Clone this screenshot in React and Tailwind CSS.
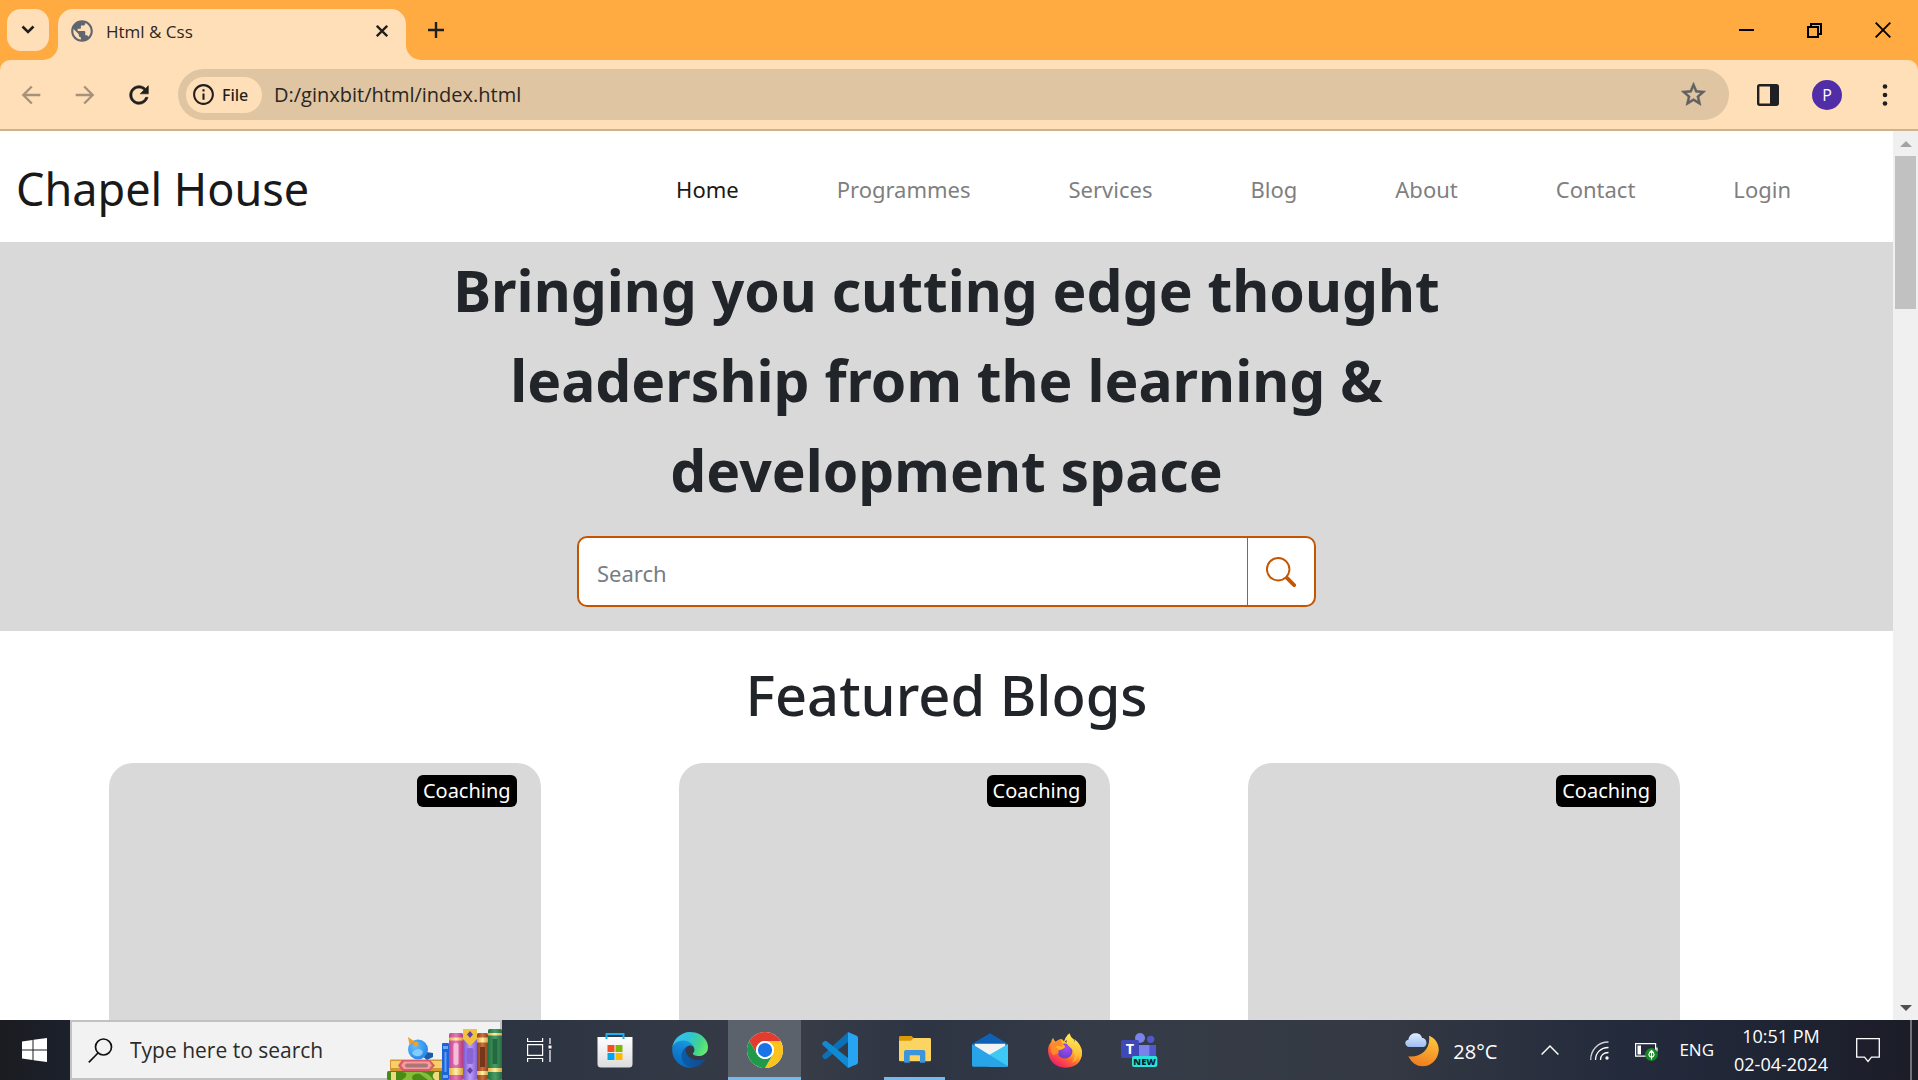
import React from "react";
import { MdArrowBack, MdArrowForward, MdInfoOutline, MdPublic } from "react-icons/md";
import { BsSearch } from "react-icons/bs";

const navLinks = ["Home", "Programmes", "Services", "Blog", "About", "Contact", "Login"];
const blogs = [1, 2, 3];

/* ---------- Browser chrome ---------- */

function TabStrip() {
  return (
    <div className="flex h-[60px] shrink-0 items-end bg-[#ffab41] pl-[7px]">
      <button aria-label="Search tabs" className="relative z-10 mb-[9px] flex h-[42px] w-[42px] items-center justify-center rounded-[14px] bg-[#ffdfb7]">
        <svg width="14" height="10" viewBox="0 0 14 10" fill="none" stroke="#1f1f1f" strokeWidth="2.6">
          <path d="M1.5 1.5 7 7l5.5-5.5" />
        </svg>
      </button>
      <span className="-ml-[6px] h-[15px] w-[15px] bg-[#ffdfb7]">
        <span className="block h-full rounded-br-[15px] bg-[#ffab41]" />
      </span>
      <div className="flex h-[51px] w-[348px] items-center rounded-t-[15px] bg-[#ffdfb7] pb-[8px] pl-[11px] pr-[14px]">
        <MdPublic size={26} color="#5f6670" />
        <span className="ml-[11px] flex-1 pt-[2px] text-[17px] text-[#2b2723]">Html &amp; Css</span>
        <button aria-label="Close tab" className="flex h-5 w-5 items-center justify-center">
          <svg width="12" height="12" viewBox="0 0 12 12" stroke="#1f1f1f" strokeWidth="2.3">
            <path d="M.8.8l10.4 10.4M11.2.8.8 11.2" />
          </svg>
        </button>
      </div>
      <span className="h-[15px] w-[15px] bg-[#ffdfb7]">
        <span className="block h-full rounded-bl-[15px] bg-[#ffab41]" />
      </span>
      <button aria-label="New tab" className="mb-[21px] flex h-[18px] w-[30px] items-center justify-center">
        <svg width="16" height="16" viewBox="0 0 16 16" stroke="#1f1f1f" strokeWidth="2.4">
          <path d="M8 0v16M0 8h16" />
        </svg>
      </button>
      <div className="ml-auto flex h-full pr-px">
        <button aria-label="Minimize" className="flex w-[68px] items-center justify-center">
          <svg width="15" height="15" viewBox="0 0 15 15" stroke="#000" strokeWidth="2">
            <path d="M0 7h15" />
          </svg>
        </button>
        <button aria-label="Restore" className="flex w-[68px] items-center justify-center">
          <svg width="15" height="15" viewBox="0 0 15 15" fill="none" stroke="#000" strokeWidth="2">
            <path d="M1 4h10v10H1zM4 4V1h10v10h-3" />
          </svg>
        </button>
        <button aria-label="Close" className="flex w-[69px] items-center justify-center">
          <svg width="16" height="16" viewBox="0 0 16 16" stroke="#000" strokeWidth="1.9">
            <path d="M.7.7l14.6 14.6M15.3.7.7 15.3" />
          </svg>
        </button>
      </div>
    </div>
  );
}

function Toolbar() {
  return (
    <div className="shrink-0 bg-[#ffab41]">
      <div className="flex h-[71px] items-center rounded-t-[10px] border-b-2 border-[#cfb28f] bg-[#ffdfb7] pl-[17px] pr-[20px]">
        <button aria-label="Back"><MdArrowBack size={28} color="#a6917b" /></button>
        <button aria-label="Forward" className="ml-[26px]"><MdArrowForward size={28} color="#a6917b" /></button>
        <button aria-label="Reload" className="ml-[26px]">
          <svg width="28" height="28" viewBox="0 0 24 24" fill="#1f1f1f" stroke="#1f1f1f" strokeWidth="0.5">
            <path d="M17.650 6.350C16.200 4.900 14.210 4 12 4c-4.420 0-7.990 3.580-7.990 8s3.570 8 7.990 8c3.730 0 6.840-2.550 7.730-6h-2.080c-.82 2.330-3.040 4-5.650 4-3.310 0-6-2.690-6-6s2.690-6 6-6c1.660 0 3.140.69 4.220 1.780L13 11h7V4l-2.350 2.350z" />
          </svg>
        </button>
        <div className="ml-[25px] flex h-[51px] flex-1 items-center rounded-full bg-[#dfc5a2] pl-2 pr-[21px]">
          <button className="flex h-9 w-[76px] items-center rounded-full bg-[#ffdfb7] pl-[5px] text-[16px] text-[#1f1f1f]">
            <MdInfoOutline size={25} />
            <span className="ml-[6px] font-['Noto_Sans'] font-medium">File</span>
          </button>
          <input
            aria-label="Address"
            defaultValue="D:/ginxbit/html/index.html"
            className="ml-3 min-w-0 flex-1 bg-transparent text-[20px] leading-7 text-[#2a2622] outline-none"
          />
          <button aria-label="Bookmark">
            <svg width="29" height="29" viewBox="0 0 24 24" fill="#606062" stroke="#606062" strokeWidth="0.500">
              <path d="M22 9.240l-7.190-.62L12 2 9.190 8.630 2 9.240l5.460 4.730L5.820 21 12 17.270 18.180 21l-1.630-7.030L22 9.240zM12 15.400l-3.760 2.270 1-4.280-3.320-2.880 4.380-.38L12 6.100l1.710 4.040 4.380.38-3.320 2.880 1 4.280L12 15.400z" />
            </svg>
          </button>
        </div>
        <button aria-label="Side panel" className="ml-[28px]">
          <svg width="22" height="22" viewBox="0 0 22 22">
            <rect x="1.2" y="1.2" width="19.6" height="19.6" rx="1.5" fill="none" stroke="#1f2023" strokeWidth="2.4" />
            <path d="M13 1h8v20h-8z" fill="#1f2023" />
          </svg>
        </button>
        <button aria-label="Profile" className="ml-[33px] flex h-[30px] w-[30px] items-center justify-center rounded-full bg-[#512da8] text-[16px] text-white">
          P
        </button>
        <button aria-label="Menu" className="ml-[30px] flex w-[26px] justify-center">
          <svg width="6" height="22" viewBox="0 0 6 22" fill="#1f1f1f">
            <circle cx="3" cy="2.5" r="2.3" />
            <circle cx="3" cy="11" r="2.3" />
            <circle cx="3" cy="19.5" r="2.3" />
          </svg>
        </button>
      </div>
    </div>
  );
}

/* ---------- Web page ---------- */

function Page() {
  return (
    <main className="min-w-0 flex-1 overflow-hidden bg-white font-['Noto_Sans','Open_Sans',sans-serif] text-[#212529]">
      <header className="flex h-[111px] items-center pl-4 pr-[102px] pt-[5px]">
        <a href="#" className="whitespace-nowrap text-[45px] leading-[68px] text-[#191919]">Chapel House</a>
        <nav className="ml-auto flex gap-[98px] text-[22px]">
          {navLinks.map((label, i) => (
            <a key={label} href="#" className={i === 0 ? "text-[#191919]" : "text-[#7f7f7f]"}>{label}</a>
          ))}
        </nav>
      </header>

      <section className="flex flex-col items-center bg-[#d9d9d9] pb-6 pt-[3px]">
        <h1 className="max-w-[1040px] text-center text-[57px] font-bold leading-[90px]">
          Bringing you cutting edge thought leadership from the learning &amp; development space
        </h1>
        <form className="mt-[21px] flex h-[71px] w-full max-w-[739px] overflow-hidden rounded-[10px] border-2 border-[#c65500] bg-white" onSubmit={(e) => e.preventDefault()}>
          <input aria-label="Search" placeholder="Search" className="min-w-0 flex-1 px-[18px] pt-1 text-[22px] outline-none placeholder:text-[#777d84]" />
          <button aria-label="Submit search" className="flex w-[67px] items-center justify-center border-l border-[#c65500]">
            <BsSearch size={30} color="#c65500" />
          </button>
        </form>
      </section>

      <section className="pt-[27px]">
        <h2 className="text-center text-[56px] font-medium leading-[72px]">Featured Blogs</h2>
        <div className="mt-[33px] grid grid-cols-3 gap-x-[138px] pl-[109px] pr-[213px]">
          {blogs.map((id) => (
            <article key={id} className="flex h-[400px] items-start justify-end rounded-[24px] bg-[#d9d9d9] pr-6 pt-3">
              <span className="flex h-8 items-center rounded-md bg-black px-[6px] text-[20px] text-white">Coaching</span>
            </article>
          ))}
        </div>
      </section>
    </main>
  );
}

function Scrollbar() {
  return (
    <div className="flex w-[25px] flex-col items-center bg-[#f0f0f0]">
      <button aria-label="Scroll up" className="flex h-[25px] items-center justify-center">
        <svg width="12" height="6" viewBox="0 0 12 6" fill="#a3a3a3"><path d="M6 0l6 6H0z" /></svg>
      </button>
      <span className="h-[153px] w-[21px] bg-[#c1c1c1]" />
      <button aria-label="Scroll down" className="mt-auto flex h-[25px] items-center justify-center">
        <svg width="12" height="6" viewBox="0 0 12 6" fill="#505050"><path d="M0 0h12L6 6z" /></svg>
      </button>
    </div>
  );
}

/* ---------- Taskbar icons ---------- */

function Books() {
  return (
    <svg width="115" height="52" viewBox="0 0 115 52" className="shrink-0">
      <defs>
        <linearGradient id="bkPink"><stop offset="0" stopColor="#c4458f" /><stop offset=".5" stopColor="#e579b5" /><stop offset="1" stopColor="#b43c82" /></linearGradient>
        <linearGradient id="bkPurple"><stop offset="0" stopColor="#7a55cf" /><stop offset=".5" stopColor="#bd9ff5" /><stop offset="1" stopColor="#8360d3" /></linearGradient>
        <linearGradient id="bkBrown"><stop offset="0" stopColor="#8f4520" /><stop offset=".5" stopColor="#c9703d" /><stop offset="1" stopColor="#8a4323" /></linearGradient>
        <linearGradient id="bkGreen"><stop offset="0" stopColor="#237443" /><stop offset=".5" stopColor="#4b9b66" /><stop offset="1" stopColor="#256c41" /></linearGradient>
        <linearGradient id="bkGold"><stop offset="0" stopColor="#e2a93e" /><stop offset=".5" stopColor="#fff0a5" /><stop offset="1" stopColor="#d9a035" /></linearGradient>
        <radialGradient id="bird" cx=".35" cy=".35" r=".75"><stop offset="0" stopColor="#62bbff" /><stop offset="1" stopColor="#2382e4" /></radialGradient>
      </defs>
      <rect x="0" y="43" width="56" height="9" rx="1.5" fill="#4a8b17" />
      <path d="M4 44h5v8H4zM48 52c-3-3-3-5 0-8h4v8z" fill="#f1d980" />
      <path d="M14 44c8 0 6 5 1 8h11c-3-4 2-7 7-6l8 6h5c-3-6-8-8-14-8z" fill="#86bd38" />
      <rect x="3" y="31.500" width="53" height="11.500" rx="1" fill="#d59632" />
      <rect x="4" y="33" width="52" height="7" fill="#f5cf69" />
      <path d="M15 32h28l5 5.500-5 5.500H15l-4-5.500z" fill="#d75b68" />
      <path d="M17 33.500h25l3 4-3 3.500H17l-3-3.500z" fill="#f79b9c" />
      <rect x="18" y="35.500" width="23" height="4" rx="2" fill="#a97775" />
      <path d="M35 28l4-4 7 1v4l-6 3z" fill="#195ca8" />
      <circle cx="31" cy="21.500" r="10" fill="url(#bird)" />
      <path d="M21 9l6.500 4.500L22.500 17z" fill="#f59a24" />
      <circle cx="29" cy="16" r="2.500" fill="#f2a326" />
      <path d="M25 25c3-5 9-5 11-1-1 5-8 6-11 1z" fill="#82ccff" />
      <rect x="55" y="15" width="7" height="37" rx="1" fill="#1d64d8" />
      <path d="M56 18h5v3h-5zM56 47h5v3h-5z" fill="#6fa9fb" />
      <rect x="57.500" y="24" width="2" height="20" fill="#5f9df8" />
      <rect x="62" y="5" width="14" height="47" rx="1.500" fill="url(#bkPink)" />
      <path d="M62 9.500h14v3H62zM62 40h14v7H62z" fill="url(#bkGold)" />
      <rect x="66.500" y="15" width="5" height="22" rx="2" fill="#f5bdda" />
      <rect x="76" y="1" width="14" height="51" rx="1.500" fill="url(#bkPurple)" />
      <path d="M76 1h14v10l-7 7-7-7z" fill="#f2c13f" />
      <path d="M83 3l3 3.500-3 3.500-3-3.500zM83 39l3 3.500-3 3.500-3-3.500z" fill="#6442ad" />
      <rect x="79.500" y="20" width="7" height="16" rx="2" fill="#8864d6" />
      <rect x="90" y="5" width="11" height="47" rx="1.500" fill="url(#bkBrown)" />
      <path d="M90 9.500h11v5H90zM90 43h11v4H90z" fill="url(#bkGold)" />
      <rect x="93" y="19" width="5" height="20" fill="#743718" />
      <rect x="101" y="1" width="14" height="51" rx="1.500" fill="url(#bkGreen)" />
      <path d="M101 5h14v2.500h-14zM101 40h14v4h-14z" fill="url(#bkGold)" />
      <rect x="105.500" y="11" width="5" height="25" fill="#236a3f" />
    </svg>
  );
}

function TaskView() {
  return (
    <svg width="25" height="24" viewBox="0 0 25 24" fill="none" stroke="#fff" strokeWidth="1.200">
      <path d="M.6 0v3.500h15V0M.6 6.600h15v10.800H.6zM.6 24v-3.500h15V24M23 0v6M23 12v12" />
      <path d="M21.500 7.500h3v3h-3z" fill="#fff" stroke="none" />
    </svg>
  );
}

function Store() {
  return (
    <svg width="36" height="36" viewBox="0 0 36 36">
      <defs><linearGradient id="bag" x2="0" y2="1"><stop offset="0" stopColor="#fff" /><stop offset="1" stopColor="#dcdcdc" /></linearGradient></defs>
      <path d="M.5 5h35v27a3.500 3.500 0 0 1-3.500 3.500H4A3.500 3.500 0 0 1 .5 32z" fill="url(#bag)" />
      <path d="M9.500 7V2h17v5" fill="none" stroke="#1cb0ee" strokeWidth="2" />
      <path d="M10.500 13h7v7h-7z" fill="#f25022" />
      <path d="M18.500 13h7v7h-7z" fill="#7fba00" />
      <path d="M10.500 21h7v7h-7z" fill="#00a4ef" />
      <path d="M18.500 21h7v7h-7z" fill="#ffb900" />
    </svg>
  );
}

function Edge() {
  return (
    <svg width="36" height="36" viewBox="0 0 257 257">
      <defs>
        <linearGradient id="edDark" x1=".25" y1=".7" x2="1" y2=".7"><stop offset="0" stopColor="#0c59a4" /><stop offset="1" stopColor="#114a8b" /></linearGradient>
        <linearGradient id="edMid" x1=".6" y1="0" x2=".3" y2="1"><stop offset="0" stopColor="#1b9de2" /><stop offset=".4" stopColor="#1480d4" /><stop offset="1" stopColor="#0668ba" /></linearGradient>
        <linearGradient id="edTop" x1="0" y1=".3" x2="1" y2=".6"><stop offset="0" stopColor="#35c1f1" /><stop offset=".4" stopColor="#2fc3d8" /><stop offset=".75" stopColor="#42d48c" /><stop offset="1" stopColor="#66eb6e" /></linearGradient>
      </defs>
      <path fill="url(#edDark)" d="M231 190.500c-3.400 1.800-6.900 3.400-10.500 4.700a101.300 101.300 0 0 1-35.600 6.400c-46.900 0-87.700-32.200-87.700-73.600a31.400 31.400 0 0 1 16.400-27.400c-42.400 1.800-53.300 46-53.300 71.900 0 73.300 67.500 80.700 82.100 80.700 7.800 0 19.700-2.300 26.800-4.500l1.300-.4a128.300 128.300 0 0 0 66.600-52.800 4 4 0 0 0-6.100-5z" />
      <path fill="url(#edMid)" d="M105.700 241.400A79.200 79.200 0 0 1 83 220.200a80.700 80.700 0 0 1 30.500-119.600c3.200-1.500 8.500-4.100 15.600-4a32.400 32.400 0 0 1 25.700 13 31.900 31.900 0 0 1 6.300 18.700c0-.2 24.500-79.600-80-79.600C37.200 48.700 1.200 90.300 1.200 126.800a130 130 0 0 0 12.100 56 128 128 0 0 0 156.200 65.800 75.500 75.500 0 0 1-63.800-7.200z" />
      <path fill="url(#edTop)" d="M152.300 148.900c-.8 1-3.300 2.500-3.300 5.700 0 2.600 1.700 5.200 4.800 7.300 14.500 10.100 41.900 8.800 42 8.800a60.100 60.100 0 0 0 30.500-8.400 61.900 61.900 0 0 0 30.500-53.400c.3-22.400-8-37.300-11.300-43.900C224.400 23.700 178.300.8 128.200.8A128 128 0 0 0 .2 127c.5-36.500 36.700-66 80-66 3.500 0 23.500.3 42 10.100a72.600 72.600 0 0 1 30.900 29.300c6.100 10.600 7.200 24.100 7.200 29.500s-2.700 13.300-8 19z" />
    </svg>
  );
}

function Chrome() {
  return (
    <svg width="36" height="36" viewBox="0 0 48 48">
      <circle cx="24" cy="24" r="24" fill="#fff" />
      <path d="M3.220 12A24 24 0 0 1 44.780 12H24a12 12 0 0 0-10.390 18z" fill="#e33b2e" />
      <path d="M44.780 12A24 24 0 0 1 24 48l10.390-18A12 12 0 0 0 24 12z" fill="#fcc31e" />
      <path d="M24 48A24 24 0 0 1 3.220 12l10.390 18a12 12 0 0 0 20.780 0z" fill="#21994a" />
      <circle cx="24" cy="24" r="12" fill="#fff" />
      <circle cx="24" cy="24" r="9.500" fill="#1a73e8" />
    </svg>
  );
}

function VsCode() {
  return (
    <svg width="36" height="36" viewBox="0 0 108 108">
      <path d="M78 0v30L14 80q-4 3-8 0l-5-5q-2-3 1-6z" fill="#0b70b5" />
      <path d="M78 108V78L14 28q-4-3-8 0l-5 5q-2 3 1 6z" fill="#118ad4" />
      <path d="M78 0v108l26-11q4-2 4-7V18q0-5-4-7z" fill="#27a4f2" />
    </svg>
  );
}

function Explorer() {
  return (
    <svg width="32" height="28" viewBox="0 0 96 84">
      <path d="M0 4q0-4 4-4h34l8 8-8 12H0z" fill="#dd9a08" />
      <path d="M0 14h36l8-8h48q4 0 4 4v62q0 4-4 4H4q-4 0-4-4z" fill="#fcd462" />
      <path d="M15 48q0-6 6-6h52q6 0 6 6v29q0 3-3 3H63V60q0-2-2-2H34q-2 0-2 2v20H18q-3 0-3-3z" fill="#3c94dc" />
    </svg>
  );
}

function Mail() {
  return (
    <svg width="36" height="34" viewBox="0 0 108 100">
      <path d="M0 32 54 0l54 32-54 36z" fill="#0f61b5" />
      <path d="M8 31h92v20L54 78 8 51z" fill="#f3f3f3" />
      <path d="M108 32v64q0 4-4 4H50V66z" fill="#3ec9f5" />
      <path d="M0 32l108 67q-2 1-5 1H4q-4 0-4-4z" fill="#28a5e8" />
    </svg>
  );
}

function Firefox() {
  return (
    <svg width="34" height="35" viewBox="0 0 103 105">
      <defs>
        <linearGradient id="ffBody" x1=".85" y1=".1" x2=".2" y2=".95"><stop offset="0" stopColor="#fff14f" /><stop offset=".35" stopColor="#ffb02e" /><stop offset=".65" stopColor="#ff5a36" /><stop offset="1" stopColor="#ee1577" /></linearGradient>
        <linearGradient id="ffFlame" x1=".6" y1="0" x2=".4" y2="1"><stop offset="0" stopColor="#fff45a" /><stop offset="1" stopColor="#ffa327" /></linearGradient>
        <radialGradient id="ffGlobe" cx=".6" cy=".3" r=".8"><stop offset="0" stopColor="#a94bf0" /><stop offset="1" stopColor="#5b3fc4" /></radialGradient>
      </defs>
      <path d="M16 14q1 10 7 12 9-8 19-8 3 5 13 10L92 33q11 13 11 28-3 41-49 44Q5 103 0 55q0-19 10-28 0-7 6-13z" fill="url(#ffBody)" />
      <circle cx="51" cy="54" r="23" fill="url(#ffGlobe)" />
      <path d="M65 0q3 12 14 20l1 8q2-5 0-10 23 18 23 42 0 12-7 22-1-11-5-16-3 18-19 23 12-12 8-28-3-12-15-20-12-9-8-21-7 6-10 14Q50 11 65 0z" fill="url(#ffFlame)" />
      <path d="M10 27q5 3 13 1 7-8 19-10-3 6-1 12l10 10q1 7-15 11-7 3-3 11-12-2-14 6-9-3-11-19-3-13 2-22z" fill="#ff8a2b" />
      <path d="M22 42q10-6 22 0 2-3-3-12l12 11q-7 8-18 9z" fill="#ffb52e" />
    </svg>
  );
}

function Teams() {
  return (
    <svg width="37" height="34" viewBox="0 0 111 102">
      <circle cx="57" cy="15" r="15" fill="#7b83eb" />
      <circle cx="89" cy="19" r="11" fill="#5059c9" />
      <path d="M72 36h33v30q0 18-16 18-17 0-17-18z" fill="#5059c9" />
      <path d="M33 36h52v34q0 24-26 24T33 70z" fill="#7b83eb" />
      <rect y="21" width="54" height="54" rx="5" fill="#4048b8" />
      <text x="27" y="64" textAnchor="middle" fontFamily="Open Sans, sans-serif" fontWeight="700" fontSize="43" fill="#fff">T</text>
      <rect x="33" y="69" width="76" height="33" rx="6" fill="#2ce3dc" />
      <text x="71" y="96" textAnchor="middle" fontFamily="Open Sans, sans-serif" fontWeight="800" fontSize="28" fill="#06282b">NEW</text>
    </svg>
  );
}

function Weather() {
  return (
    <svg width="34" height="34" viewBox="0 0 102 102" className="shrink-0">
      <defs>
        <linearGradient id="moon" x1=".7" y1="0" x2=".4" y2="1"><stop offset="0" stopColor="#ffc83c" /><stop offset="1" stopColor="#ef7d1e" /></linearGradient>
        <linearGradient id="cloud" x2="0" y2="1"><stop offset="0" stopColor="#e0edff" /><stop offset="1" stopColor="#9dbcf2" /></linearGradient>
      </defs>
      <path d="M72 8c20 8 31 26 29 46-3 27-23 46-48 46-19 0-33-10-43-30 36 5 68-20 62-62z" fill="url(#moon)" />
      <path d="M12 42C-2 40-3 22 10 20 13 5 24 0 33 1c11 0 17 7 18 14 14-1 19 23 5 27z" fill="url(#cloud)" />
    </svg>
  );
}

function AppButton({ label, active, running, children }) {
  return (
    <button
      aria-label={label}
      className={`mx-px flex h-full w-[73px] shrink-0 items-center justify-center ${active ? "bg-[#5c626c]" : ""}`}
    >
      <span className={`flex h-full items-center justify-center border-t-[3px] border-t-transparent border-b-[3px] ${active ? "w-full border-b-[#76b9ed]" : running ? "w-[61px] border-b-[#76b9ed]" : "w-full border-b-transparent"}`}>
        {children}
      </span>
    </button>
  );
}

function Taskbar() {
  return (
    <footer className="flex h-[60px] shrink-0 items-center bg-[linear-gradient(90deg,#1b1c21_0%,#1c212d_4%,#2d3442_27%,#373c47_42%,#2d3443_48%,#363c47_58%,#343943_72%,#242b3c_84%,#202636_91%,#1b1c26_100%)] text-white">
      <button aria-label="Start" className="flex h-full w-[70px] shrink-0 items-center justify-center pr-[2px]">
        <svg width="25" height="24" viewBox="0 0 25 24" fill="#fff">
          <path d="M0 3.400 10.500 2v9.500H0zM11.500 1.800 25 0v11.500H11.500zM0 12.500h10.500V22L0 20.600zM11.500 12.500H25V24l-13.500-1.800z" />
        </svg>
      </button>
      <label className="flex h-full w-[432px] shrink-0 items-center border-2 border-[#c2c2c2] bg-[#f2f2f2] pl-4">
        <svg width="25" height="25" viewBox="0 0 25 25" fill="none" stroke="#111" strokeWidth="1.700" className="shrink-0">
          <circle cx="15.500" cy="9" r="8" />
          <path d="M10 15 .8 24.300" />
        </svg>
        <input aria-label="Type here to search" placeholder="Type here to search" className="ml-[17px] min-w-0 flex-1 bg-transparent pt-[2px] text-[21px] text-[#2b2b2b] outline-none placeholder:text-[#2b2b2b]" />
        <span className="-mr-[2px] flex h-full items-end"><span className="-mb-[2px]"><Books /></span></span>
      </label>
      <AppButton label="Task View"><TaskView /></AppButton>
      <AppButton label="Microsoft Store"><Store /></AppButton>
      <AppButton label="Microsoft Edge"><Edge /></AppButton>
      <AppButton label="Google Chrome" active><Chrome /></AppButton>
      <AppButton label="Visual Studio Code"><VsCode /></AppButton>
      <AppButton label="File Explorer" running><Explorer /></AppButton>
      <AppButton label="Mail"><Mail /></AppButton>
      <AppButton label="Firefox"><Firefox /></AppButton>
      <AppButton label="Microsoft Teams"><Teams /></AppButton>

      <div className="ml-auto flex h-full items-center">
        <button className="flex items-center gap-[14px] text-[20px]">
          <Weather />
          <span className="pt-[3px]">28°C</span>
        </button>
        <button aria-label="Show hidden icons" className="ml-[44px]">
          <svg width="18" height="12" viewBox="0 0 18 12" fill="none" stroke="#fff" strokeWidth="1.500"><path d="M.6 10.500 9 2l8.400 8.500" /></svg>
        </button>
        <button aria-label="Network" className="ml-[31px]">
          <svg width="19" height="19" viewBox="0 0 19 19" fill="none" stroke="#cfd2d8" strokeWidth="1.300">
            <path d="M.7 19C.7 9 8 1 18.500 1" />
            <path d="M5.500 19c0-7 5-12.500 13-12.500M10.500 19c0-4.500 3-7.500 8-7.500" stroke="#fff" />
            <circle cx="17" cy="17" r="1.700" fill="#fff" stroke="none" />
          </svg>
        </button>
        <button aria-label="Battery" className="ml-[26px] pt-1">
          <svg width="24" height="18" viewBox="0 0 24 18">
            <path d="M.6.6h20v12.500H.6zM22 4.500v4" fill="none" stroke="#fff" strokeWidth="1.200" />
            <path d="M2.500 2.500h3.500v9H2.500z" fill="#fff" />
            <circle cx="16.500" cy="11.500" r="6.400" fill="#128a22" />
            <path d="M16.500 7.500c-4 3-3 6 0 7 3-1 4-4 0-7zv9" fill="none" stroke="#fff" strokeWidth="1.200" />
          </svg>
        </button>
        <button className="ml-[20px] text-[17px]">ENG</button>
        <button className="ml-[17px] flex w-[100px] flex-col items-center text-[18px] leading-7">
          <span>10:51 PM</span>
          <span>02-04-2024</span>
        </button>
        <button aria-label="Notifications" className="ml-[25px]">
          <svg width="24" height="25" viewBox="0 0 24 25" fill="none" stroke="#fff" strokeWidth="1.300"><path d="M.7.700h22.600v18.500h-7.800L12 23.500l-3.500-4.300H.7z" /></svg>
        </button>
        <button aria-label="Show desktop" className="ml-[30px] h-[60px] w-2 border-l-2 border-[#6d7078]" />
      </div>
    </footer>
  );
}

export default function App() {
  return (
    <div className="flex h-screen flex-col overflow-hidden font-['Open_Sans','Noto_Sans',sans-serif]">
      <TabStrip />
      <Toolbar />
      <div className="flex min-h-0 flex-1">
        <Page />
        <Scrollbar />
      </div>
      <Taskbar />
    </div>
  );
}
